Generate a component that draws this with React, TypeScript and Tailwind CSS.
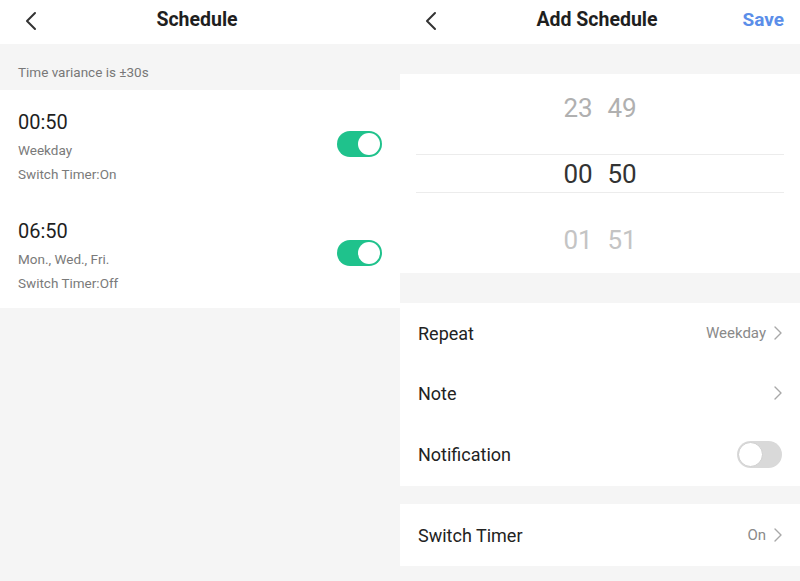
import React from 'react';

const font = { fontFamily: 'Roboto, "Noto Sans", sans-serif' };

const BackIcon = () => (
  <svg width="14" height="20" viewBox="0 0 14 20" fill="none">
    <path d="M11 2 L3 10 L11 18" stroke="#333" strokeWidth="2" strokeLinecap="round" strokeLinejoin="round" />
  </svg>
);

const Chevron = () => (
  <svg width="8" height="14" viewBox="0 0 8 14" fill="none">
    <path d="M1 1 L7 7 L1 13" stroke="#a8a8a8" strokeWidth="1.4" strokeLinecap="round" strokeLinejoin="round" />
  </svg>
);

const Toggle = ({ on }: { on: boolean }) =>
  on ? (
    <div className="w-[45px] h-[26px] rounded-full bg-[#1fc28c] flex items-center justify-end pr-[2px]">
      <div className="w-[22px] h-[22px] rounded-full bg-white" />
    </div>
  ) : (
    <div className="w-[45px] h-[27px] rounded-full bg-[#d9d9d9] flex items-center pl-[1px]">
      <div className="w-[25px] h-[25px] rounded-full bg-white border border-[#cfcfcf]" />
    </div>
  );

const Header = ({ title, right }: { title: string; right?: React.ReactNode }) => (
  <div className="h-[44px] bg-white flex items-center relative">
    <div className="absolute left-[24px] top-[11px]">
      <BackIcon />
    </div>
    <div className="flex-1 text-center pr-[6px] pb-[4px] text-[19.5px] font-bold text-[#1f1f1f]">{title}</div>
    {right && <div className="absolute right-[16px] top-[6px]">{right}</div>}
  </div>
);

const ScheduleItem = ({ time, days, timer }: { time: string; days: string; timer: string }) => (
  <div className="h-[109px] flex items-center justify-between pl-[18px] pr-[18px]">
    <div className="flex flex-col pt-[7px]">
      <div className="text-[20px] leading-[24px] text-[#1f1f1f]">{time}</div>
      <div className="mt-[4px] text-[13.5px] leading-[24px] text-[#7a7a7a]">{days}</div>
      <div className="text-[13.5px] leading-[24px] text-[#7a7a7a]">{timer}</div>
    </div>
    <div className="mb-[1px]">
      <Toggle on />
    </div>
  </div>
);

const SettingRow = ({ label, value, chevron, toggle, h }: { label: string; value?: string; chevron?: boolean; toggle?: boolean; h: string }) => (
  <div className={`${h} flex items-center justify-between pl-[18px] pr-[18px]`}>
    <span className="text-[18px] text-[#222]">{label}</span>
    <div className="flex items-center gap-[8px]">
      {value && <span className="text-[15px] text-[#8a8a8a]">{value}</span>}
      {chevron && <Chevron />}
      {toggle && <Toggle on={false} />}
    </div>
  </div>
);

const PickerRow = ({ h, m, color }: { h: string; m: string; color: string }) => (
  <div className={`grid grid-cols-[44px_44px] justify-center text-[26px] ${color}`}>
    <span className="text-center">{h}</span>
    <span className="text-center">{m}</span>
  </div>
);

export default function App() {
  return (
    <div className="w-[800px] h-[581px] flex bg-[#f5f5f5] overflow-hidden" style={font}>
      <div className="w-[400px] flex flex-col">
        <Header title="Schedule" />
        <div className="h-[46px] pl-[18px] pt-[20px] text-[13.5px] leading-[16px] text-[#787878]">Time variance is ±30s</div>
        <div className="bg-white">
          <ScheduleItem time="00:50" days="Weekday" timer="Switch Timer:On" />
          <ScheduleItem time="06:50" days="Mon., Wed., Fri." timer="Switch Timer:Off" />
        </div>
      </div>
      <div className="w-[400px] flex flex-col">
        <Header title="Add Schedule" right={<span className="text-[19px] font-bold text-[#5b8ee9]">Save</span>} />
        <div className="h-[30px]" />
        <div className="bg-white h-[199px] flex flex-col">
          <div className="h-[66px] pt-[3px] flex items-center justify-center">
            <PickerRow h="23" m="49" color="text-[#b0b0b0]" />
          </div>
          <div className="h-[66px] flex items-center">
            <div className="mx-[16px] flex-1 h-[39px] pt-[2px] border-y border-[#ececec] flex items-center justify-center">
              <PickerRow h="00" m="50" color="text-[#333]" />
            </div>
          </div>
          <div className="h-[66px] pt-[3px] flex items-center justify-center">
            <PickerRow h="01" m="51" color="text-[#c4c4c4]" />
          </div>
        </div>
        <div className="h-[30px]" />
        <div className="bg-white">
          <SettingRow h="h-[60px]" label="Repeat" value="Weekday" chevron />
          <SettingRow h="h-[60px]" label="Note" chevron />
          <SettingRow h="h-[63px]" label="Notification" toggle />
        </div>
        <div className="h-[18px]" />
        <div className="bg-white">
          <SettingRow h="h-[62px]" label="Switch Timer" value="On" chevron />
        </div>
      </div>
    </div>
  );
}
